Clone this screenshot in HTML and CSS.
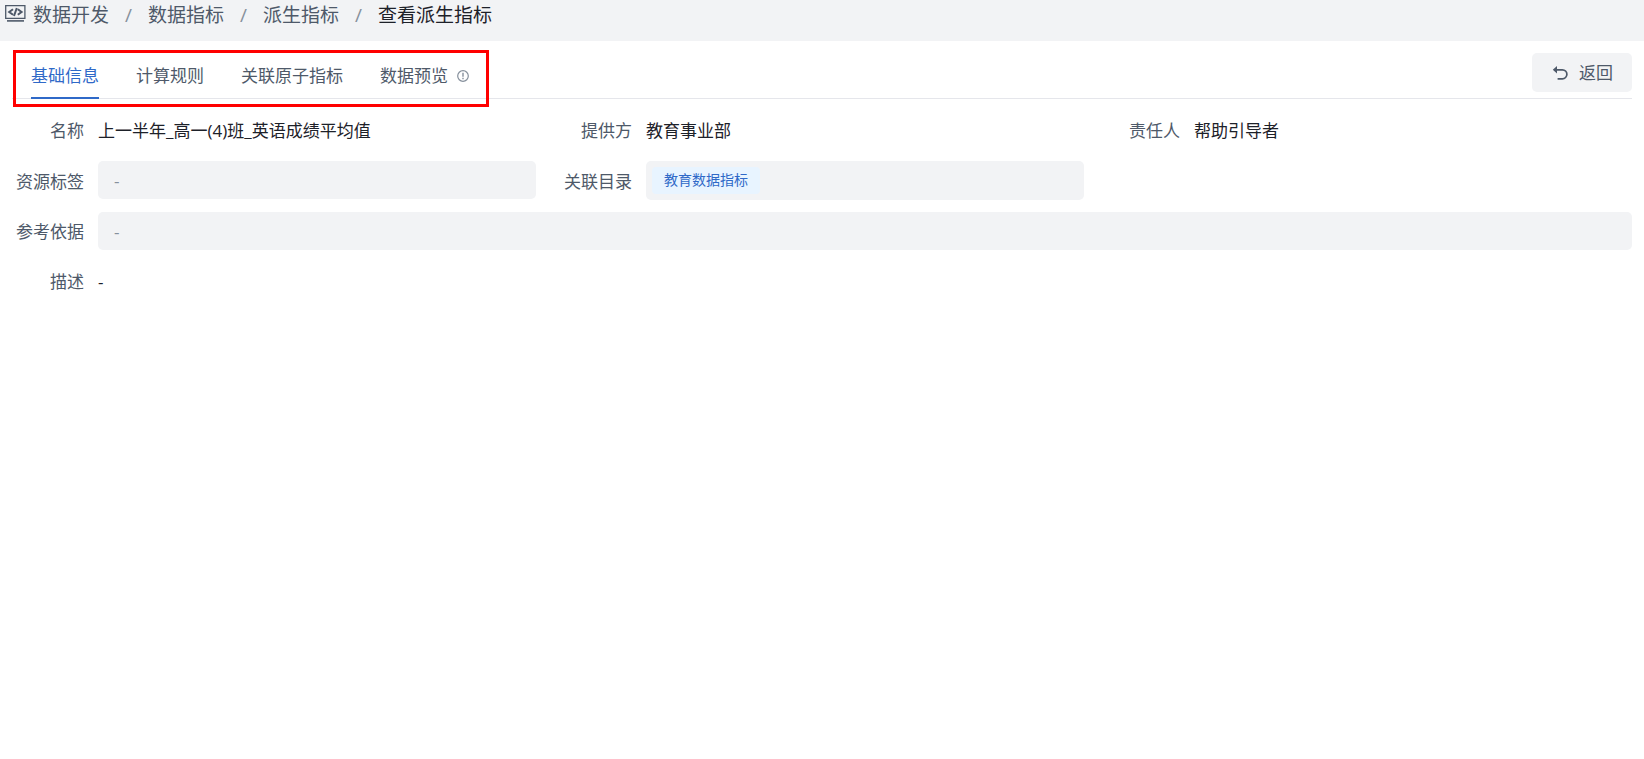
FILE: index.html
```html
<!DOCTYPE html>
<html lang="zh-CN">
<head>
<meta charset="utf-8">
<meta name="viewport" content="width=device-width, initial-scale=1">
<title>查看派生指标</title>
<link rel="stylesheet" href="styles.css">
</head>
<body>
<nav class="breadcrumb" aria-label="面包屑">
  <svg class="breadcrumb-icon" viewBox="0 0 21 17" width="21" height="17" fill="none" stroke="currentColor" aria-hidden="true">
    <path d="M0.7 0.7h19.2v12.6H0.7z" stroke-width="1.3"/>
    <path d="M2 15.9h17" stroke-width="1.6"/>
    <path d="M8 4.2 4.2 7l3.8 2.8M12.8 4.2 16.6 7l-3.8 2.8M11.8 3 9 11" stroke-width="2"/>
  </svg>
  <ol class="breadcrumb-list">
    <li class="breadcrumb-item"><a href="#">数据开发</a></li>
    <li class="breadcrumb-item"><a href="#">数据指标</a></li>
    <li class="breadcrumb-item"><a href="#">派生指标</a></li>
    <li class="breadcrumb-item current" aria-current="page">查看派生指标</li>
  </ol>
</nav>
<main class="page">
  <header class="page-header">
    <div class="tabs" role="tablist">
      <button class="tab active" type="button" role="tab" aria-selected="true">基础信息</button>
      <button class="tab" type="button" role="tab" aria-selected="false">计算规则</button>
      <button class="tab" type="button" role="tab" aria-selected="false">关联原子指标</button>
      <button class="tab" type="button" role="tab" aria-selected="false">数据预览
        <svg class="tab-info" viewBox="0 0 12 12" width="12" height="12" fill="none" stroke="currentColor" aria-hidden="true">
          <circle cx="6" cy="6" r="5.3" stroke-width="1.2"/>
          <path d="M6 2.8v3.9M6 7.8v1.4" stroke-width="1.4"/>
        </svg>
      </button>
    </div>
    <button class="back" type="button">
      <svg viewBox="0 0 16 16" width="16" height="16" fill="none" stroke="currentColor" stroke-width="1.7" aria-hidden="true">
        <path d="M2 4.8h8.4a4.5 4.5 0 0 1 0 9H5.6"/>
        <path d="M5 1 .8 4.8 5 8.4z" fill="currentColor" stroke="none"/>
      </svg>
      返回
    </button>
  </header>
  <form class="details">
    <div class="field">
      <label class="field-label" for="name">名称</label>
      <output class="field-text" id="name">上一半年_高一(4)班_英语成绩平均值</output>
    </div>
    <div class="field">
      <label class="field-label" for="provider">提供方</label>
      <output class="field-text" id="provider">教育事业部</output>
    </div>
    <div class="field">
      <label class="field-label" for="owner">责任人</label>
      <output class="field-text" id="owner">帮助引导者</output>
    </div>
    <div class="field">
      <label class="field-label" for="tags">资源标签</label>
      <input class="field-input" id="tags" type="text" value="-" readonly>
    </div>
    <div class="field">
      <label class="field-label" for="catalog">关联目录</label>
      <output class="field-tags" id="catalog"><span class="tag">教育数据指标</span></output>
    </div>
    <div class="field wide">
      <label class="field-label" for="reference">参考依据</label>
      <input class="field-input" id="reference" type="text" value="-" readonly>
    </div>
    <div class="field wide">
      <label class="field-label" for="description">描述</label>
      <output class="field-text" id="description">-</output>
    </div>
  </form>
</main>
</body>
</html>
```

FILE: styles.css
```css
* {
  box-sizing: border-box;
}

body {
  margin: 0;
  background: #fff;
  color: #4e5969;
  font-family: "Open Sans", "Noto Sans CJK SC", sans-serif;
  font-size: 17px;
  line-height: 24px;
}

button,
input {
  font: inherit;
  color: inherit;
}

.breadcrumb {
  display: flex;
  align-items: flex-start;
  gap: 7px;
  height: 41px;
  padding: 1px 5px;
  background: #f2f3f5;
  font-size: 19px;
  line-height: 28px;
}

.breadcrumb-icon {
  flex: none;
  margin-top: 4px;
}

.breadcrumb-list {
  display: flex;
  margin: 0;
  padding: 0;
  list-style: none;
}

.breadcrumb-item + .breadcrumb-item::before {
  content: "/";
  margin: 0 16px;
  color: #86909c;
}

.breadcrumb-item a {
  color: inherit;
  text-decoration: none;
}

.breadcrumb-item.current {
  color: #1d2129;
}

.page {
  padding: 0 12px;
}

.page-header {
  display: flex;
  align-items: flex-start;
  justify-content: space-between;
  padding-top: 12px;
  border-bottom: 1px solid #e5e6eb;
}

.tabs {
  position: relative;
  display: flex;
  gap: 37px;
  margin: 0 0 -1px 19px;
}

/* Highlight frame around the tab group */
.tabs::after {
  content: "";
  position: absolute;
  inset: -3px -20px -8px -18px;
  border: 3px solid #f00;
  pointer-events: none;
}

.tab {
  display: flex;
  align-items: center;
  gap: 9px;
  height: 46px;
  padding: 2px 0 0;
  border: 0;
  border-bottom: 2px solid transparent;
  background: none;
  white-space: nowrap;
}

.tab.active {
  border-bottom-color: #2f69c8;
  color: #2f69c8;
}

.tab-info {
  color: #86909c;
}

.back {
  display: flex;
  align-items: center;
  gap: 11px;
  height: 39px;
  padding: 0 19px 0 20px;
  border: 0;
  border-radius: 5px;
  background: #f2f3f5;
}

.details {
  display: grid;
  grid-template-columns: repeat(3, minmax(0, 1fr));
  gap: 12px 24px;
  padding-top: 12px;
}

.field {
  display: flex;
  align-items: center;
  min-height: 38px;
}

.field.wide {
  grid-column: 1 / -1;
}

.field-label {
  flex: none;
  width: 86px;
  padding: 2px 14px 0 0;
  text-align: right;
}

.field-text {
  padding-top: 2px;
  color: #1d2129;
}

.field-input,
.field-tags {
  flex: 1;
  min-width: 0;
  border: 0;
  border-radius: 5px;
  background: #f2f3f5;
}

.field-input {
  align-self: flex-start;
  height: 38px;
  padding: 0 16px;
  color: #86909c;
}

.field-tags {
  display: flex;
  padding: 6px;
}

.tag {
  padding: 0 12px 2px;
  border-radius: 4px;
  background: #e8f4ff;
  color: #2f69c8;
  font-size: 14px;
  line-height: 25px;
}
```
